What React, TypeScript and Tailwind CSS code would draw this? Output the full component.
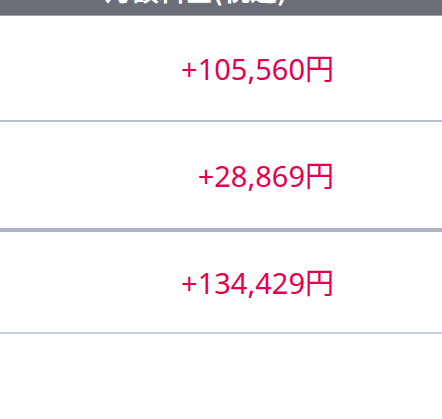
const rows = [
  {amount: "+105,560円", cls: "h-[106px] border-b-2 border-[#b7c0d3]"},
  {amount: "+28,869円", cls: "h-[110px] border-b-4 border-[#aeb7c9]"},
  {amount: "+134,429円", cls: "h-[102px] border-b-2 border-[#c7cedc]"},
];

export default function App() {
  return (
    <div className="w-[442px] h-[419px] bg-white overflow-hidden" style={{fontFamily: '"Noto Sans", "Noto Sans CJK JP", sans-serif'}}>
      <div className="h-[16px] bg-[#6b6e77] border-b border-[#9ea3b0] overflow-hidden relative">
        <p
          className="absolute left-0 right-[50px] bottom-[12px] text-center text-white text-[27px] font-bold leading-none"
          style={{fontFamily: '"Noto Sans CJK JP", sans-serif'}}
        >
          月額料金(税込)
        </p>
      </div>
      {rows.map(row => (
        <div key={row.amount} className={`flex items-center justify-end pr-[108px] ${row.cls}`}>
          <span className="text-[#e5004f] text-[29px] leading-none">{row.amount}</span>
        </div>
      ))}
    </div>
  );
}
